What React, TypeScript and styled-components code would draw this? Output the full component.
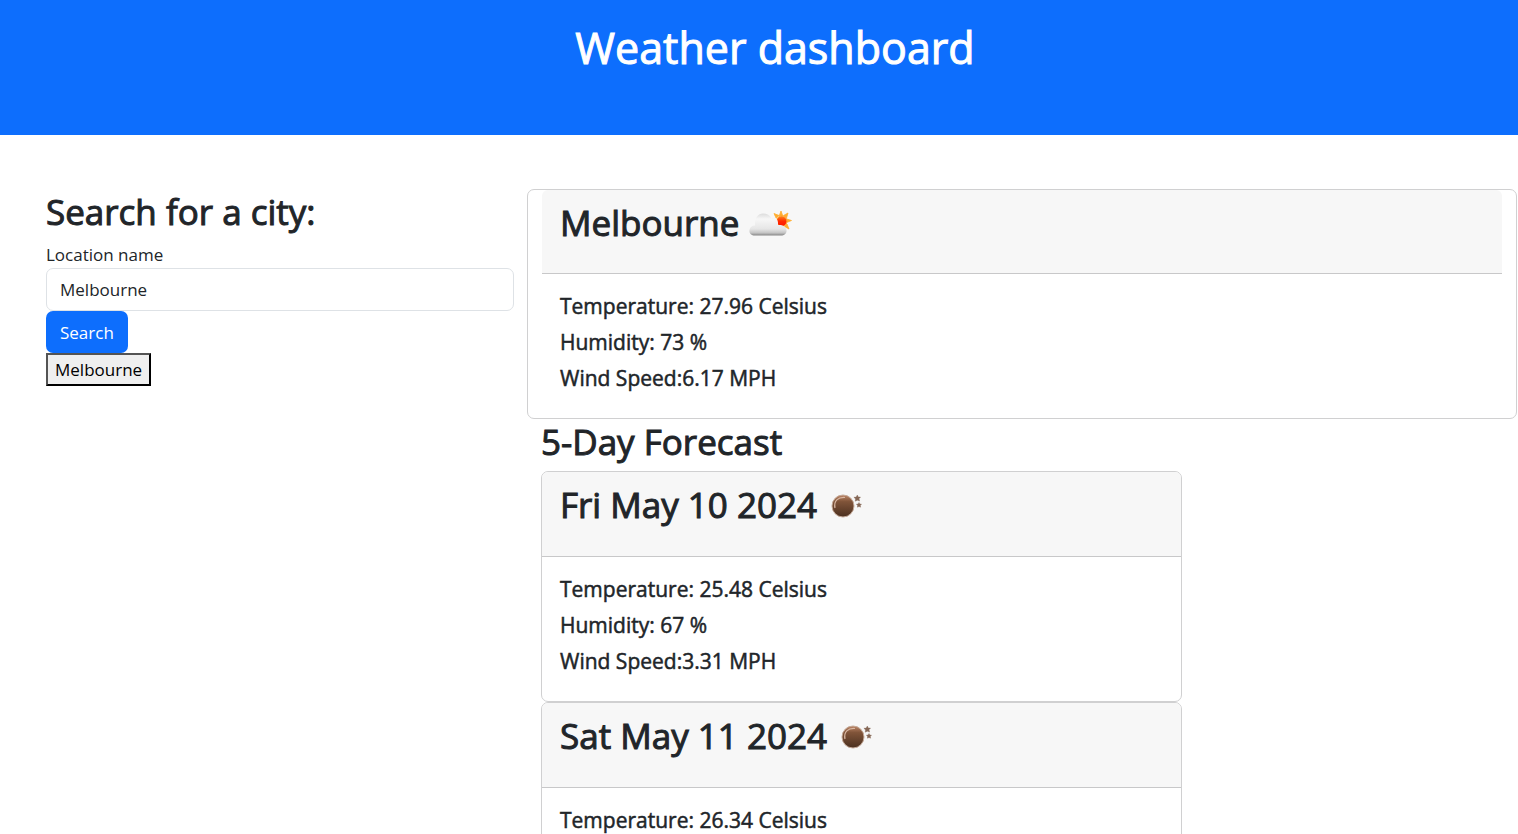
import React, { useState } from "react";
import styled, { createGlobalStyle } from "styled-components";

const GlobalStyle = createGlobalStyle`
  *, *::before, *::after { box-sizing: border-box; }
  body {
    margin: 0;
    background: #fff;
    color: #212529;
    font-family: "Open Sans", "Noto Sans", sans-serif;
    font-size: 17px;
    line-height: 27px;
  }
`;

const Banner = styled.header`
  height: 135px;
  padding: 20px 0 0 32px;
  background: #0d6efd;
  color: #fff;
  text-align: center;
`;

const Title = styled.h1`
  margin: 0;
  font-size: 43px;
  line-height: 56px;
  font-weight: 500;
  -webkit-text-stroke: 1px currentColor;
`;

const Content = styled.main`
  display: grid;
  grid-template-columns: minmax(0, 1fr) minmax(0, 2fr);
  padding: 54px 1px 0 32px;
`;

const SearchColumn = styled.section`
  padding: 0 13px 0 14px;
`;

const Heading = styled.h2`
  margin: 0 0 7px;
  font-size: 35px;
  line-height: 45px;
  font-weight: 500;
  -webkit-text-stroke: 1px currentColor;
`;

const SearchForm = styled.form`
  display: flex;
  flex-direction: column;
  align-items: flex-start;
`;

const CityInput = styled.input`
  width: 100%;
  height: 43px;
  padding: 0 13px;
  border: 1px solid #dee2e6;
  border-radius: 7px;
  background: #fff;
  color: inherit;
  font: inherit;
`;

const SearchButton = styled.button`
  height: 42px;
  padding: 0 14px;
  border: 0;
  border-radius: 7px;
  background: #0d6efd;
  color: #fff;
  font: inherit;
`;

const HistoryButton = styled.button`
  display: block;
  height: 33px;
  padding: 0 7px;
  border: 2px outset #000;
  background: #efefef;
  color: #000;
  font: inherit;
`;

const CardHeader = styled.div`
  height: 85px;
  padding: 10px 18px;
  border-bottom: 1px solid #c8c8c9;
  border-radius: 6px 6px 0 0;
  background: #f7f7f7;
`;

const Card = styled.article<{ $inset?: boolean }>`
  padding: 0 ${(p) => (p.$inset ? 14 : 0)}px;
  border: 1px solid #d0d0d1;
  border-radius: 7px;
  background: #fff;

  ${CardHeader} {
    height: ${(p) => (p.$inset ? 84 : 85)}px;
  }
`;

const CardTitle = styled(Heading)`
  display: flex;
  align-items: center;
  gap: 9px;
  margin: 0;
`;

const CardBody = styled.div`
  padding: 19px 18px 17px;
`;

const Reading = styled.p`
  margin: 0 0 9px;
  font-size: 21px;
  line-height: 27px;
  font-weight: 500;
  -webkit-text-stroke: 0.5px currentColor;
`;

const Forecast = styled.section`
  padding: 0 14px;
`;

const ForecastList = styled.div`
  width: 66.6667%;
`;

const Icon = styled.svg`
  flex: none;
`;

const CloudSun = () => (
  <Icon width="44" height="30" viewBox="0 0 44 30" aria-hidden="true">
    <defs>
      <linearGradient id="cloud" x1="0" y1="0" x2="0" y2="1">
        <stop offset="0" stopColor="#dcdcdc" />
        <stop offset=".25" stopColor="#f7f7f7" />
        <stop offset=".7" stopColor="#e6e6e6" />
        <stop offset=".88" stopColor="#c4c4c4" />
        <stop offset="1" stopColor="#858585" />
      </linearGradient>
      <linearGradient id="sun" x1="0" y1="0" x2="0" y2="1">
        <stop offset="0" stopColor="#ff8a1c" />
        <stop offset=".5" stopColor="#ff2a00" />
        <stop offset="1" stopColor="#ff1500" />
      </linearGradient>
    </defs>
    <path
      d="M33 3l1.800 5h-3.600zM40 5l-1.500 5-3-2.500zM43.500 12.500l-5 2v-3.600zM41 21l-4.500-2.500 2.500-2.500zM33.500 23l-1.500-4h3.500zM26 5.500l5 2-2.800 2.700z"
      fill="#ffad2e"
      stroke="#ffad2e"
      strokeWidth=".8"
      strokeLinejoin="round"
    />
    <circle cx="33.700" cy="13.200" r="5.200" fill="url(#sun)" stroke="#ffa030" strokeWidth="1" />
    <path
      d="M7 27.500c-4 0-6-2.500-5.500-5.500C2 19 4 17.500 7 17.500 6.500 10.500 9.500 5.500 15 5.500c4 0 7 1.500 8.500 5 2.500-1.500 5-.5 6 2 .7 1.700.5 3.500.5 4.500 4-.5 8 1.500 8.500 5 .4 3.500-2 5.500-5.500 5.500z"
      fill="url(#cloud)"
    />
  </Icon>
);

const NightSky = () => (
  <Icon width="42" height="30" viewBox="0 0 42 30" aria-hidden="true">
    <defs>
      <linearGradient id="moon" x1="0" y1="0" x2="0" y2="1">
        <stop offset="0" stopColor="#bd8667" />
        <stop offset=".3" stopColor="#805439" />
        <stop offset="1" stopColor="#4b3020" />
      </linearGradient>
    </defs>
    <circle cx="17" cy="16" r="11" fill="url(#moon)" stroke="#c5aa99" strokeWidth="1" />
    <path
      d="M9 18C7.500 11 12 7 19 7.500"
      fill="none"
      stroke="#d8b7a3"
      strokeWidth="1.200"
    />
    <path
      d="M31.300 5l1 2 2.200.1-1.500 1.700.6 2.300-2.300-.9-2.100 1 .4-2.300-1.700-1.600 2.300-.2zM33 12.500l.8 1.500 1.700.2-1.200 1.300.3 1.700-1.600-.7-1.600.7.200-1.700-1.200-1.300 1.700-.2z"
      fill="#856756"
      stroke="#856756"
      strokeWidth=".4"
    />
  </Icon>
);

type Weather = { temperature: string; humidity?: string; wind?: string };

const Readings = ({ temperature, humidity, wind }: Weather) => (
  <CardBody>
    <Reading>Temperature: {temperature} Celsius</Reading>
    {humidity && <Reading>Humidity: {humidity} %</Reading>}
    {wind && <Reading>Wind Speed:{wind} MPH</Reading>}
  </CardBody>
);

const days: (Weather & { date: string })[] = [
  { date: "Fri May 10 2024", temperature: "25.48", humidity: "67", wind: "3.31" },
  { date: "Sat May 11 2024", temperature: "26.34" },
];

export default function App() {
  const [city, setCity] = useState("Melbourne");
  return (
    <>
      <GlobalStyle />
      <Banner>
        <Title>Weather dashboard</Title>
      </Banner>
      <Content>
        <SearchColumn>
          <Heading>Search for a city:</Heading>
          <SearchForm onSubmit={(e) => e.preventDefault()}>
            <label htmlFor="city">Location name</label>
            <CityInput id="city" value={city} onChange={(e) => setCity(e.target.value)} />
            <SearchButton type="submit">Search</SearchButton>
          </SearchForm>
          <HistoryButton type="button" onClick={() => setCity("Melbourne")}>
            Melbourne
          </HistoryButton>
        </SearchColumn>
        <div>
          <Card $inset>
            <CardHeader>
              <CardTitle>
                Melbourne
                <CloudSun />
              </CardTitle>
            </CardHeader>
            <Readings temperature="27.96" humidity="73" wind="6.17" />
          </Card>
          <Forecast>
            <Heading>5-Day Forecast</Heading>
            <ForecastList>
              {days.map(({ date, ...weather }) => (
                <Card key={date}>
                  <CardHeader>
                    <CardTitle>
                      {date}
                      <NightSky />
                    </CardTitle>
                  </CardHeader>
                  <Readings {...weather} />
                </Card>
              ))}
            </ForecastList>
          </Forecast>
        </div>
      </Content>
    </>
  );
}
